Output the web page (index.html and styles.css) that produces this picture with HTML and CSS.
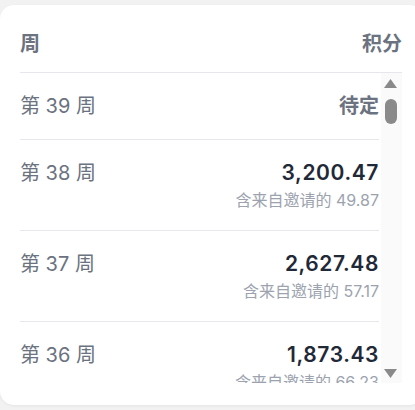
FILE: index.html
```html
<!DOCTYPE html>
<html lang="zh-CN">
<head>
  <meta charset="UTF-8" />
  <meta name="viewport" content="width=device-width, initial-scale=1.0" />
  <title>积分记录</title>
  <link rel="stylesheet" href="styles.css">
</head>
<body>
  <div class="card">
    <div class="card-head">
      <span>周</span>
      <span>积分</span>
    </div>
    <div class="scroll-area">
      <div class="weeks">
        <div class="row">
          <span class="week">第 39 周</span>
          <div class="points"><div class="pending">待定</div></div>
        </div>
        <div class="row">
          <span class="week">第 38 周</span>
          <div class="points">
            <div class="total">3,200.47</div>
            <div class="invite">含来自邀请的 49.87</div>
          </div>
        </div>
        <div class="row">
          <span class="week">第 37 周</span>
          <div class="points">
            <div class="total">2,627.48</div>
            <div class="invite">含来自邀请的 57.17</div>
          </div>
        </div>
        <div class="row">
          <span class="week">第 36 周</span>
          <div class="points">
            <div class="total">1,873.43</div>
            <div class="invite">含来自邀请的 66.23</div>
          </div>
        </div>
      </div>
      <div class="scrollbar">
        <svg class="arrow up" width="13" height="9" viewBox="0 0 13 9"><polygon points="0,9 13,9 6.5,0" /></svg>
        <div class="thumb"></div>
        <div class="spacer"></div>
        <svg class="arrow down" width="13" height="9" viewBox="0 0 13 9"><polygon points="0,0 13,0 6.5,9" /></svg>
      </div>
    </div>
  </div>
</body>
</html>
```

FILE: styles.css
```css
html, body {
  overflow: hidden;
}
body {
  margin: 0;
  height: 410px;
  background: #f2f2f3;
  font-family: Inter, "Noto Sans CJK SC", sans-serif;
}
.card {
  box-sizing: border-box;
  width: 424px;
  margin-top: 5px;
  padding: 0 22px 22px 20px;
  background: #fff;
  border-radius: 14px;
  box-shadow: 0 1px 3px rgba(0, 0, 0, 0.06);
}
.card-head {
  display: flex;
  justify-content: space-between;
  padding: 26px 0 15px;
  line-height: 26px;
  font-size: 20px;
  font-weight: 700;
  color: #6b7280;
  border-bottom: 1px solid #e5e7eb;
}
.scroll-area {
  display: flex;
  height: 310px;
}
.weeks {
  flex: 1;
  overflow: hidden;
  padding-right: 2px;
}
.scrollbar {
  width: 21px;
  box-sizing: border-box;
  padding: 6px 2px 5px 0;
  display: flex;
  flex-direction: column;
  align-items: center;
  background: #fafafa;
}
.arrow {
  display: block;
  fill: #8a8a8a;
}
.thumb {
  width: 12px;
  height: 25px;
  margin-top: 11px;
  border-radius: 6px;
  background: #8a8a8a;
}
.spacer {
  flex: 1;
}
.row {
  display: flex;
  justify-content: space-between;
  align-items: flex-start;
  padding: 19px 0;
  border-bottom: 1px solid #e5e7eb;
}
.week {
  font-size: 20px;
  line-height: 28px;
  color: #6b7280;
}
.points {
  text-align: right;
}
.pending {
  font-size: 20px;
  line-height: 28px;
  font-weight: 700;
  color: #6b7280;
}
.total {
  font-size: 21px;
  line-height: 28px;
  font-weight: 600;
  letter-spacing: 0.6px;
  color: #1f2937;
}
.invite {
  margin-top: 3px;
  font-size: 16px;
  line-height: 21px;
  color: #9ca3af;
}
```
